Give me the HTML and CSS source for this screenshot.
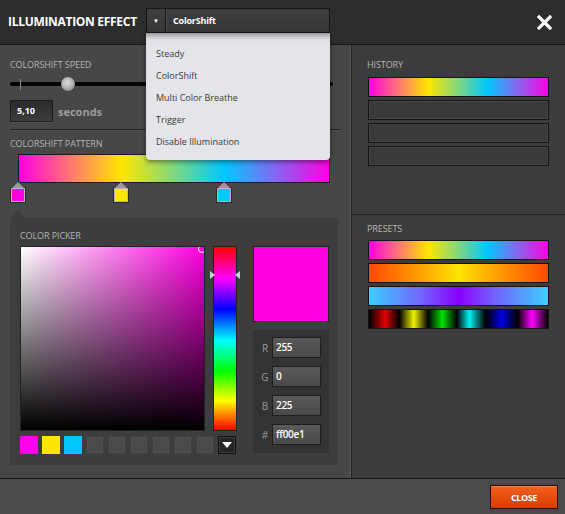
FILE: index.html
```html
<!DOCTYPE html>
<html>
<head>
<meta charset="utf-8">
<link rel="stylesheet" href="styles.css">
</head>
<body>
<div class="app">
  <header class="top">
    <div class="title">ILLUMINATION EFFECT</div>
    <div class="select">
      <span class="caret">&#9660;</span>
      <span class="sep"></span>
      <span class="value">ColorShift</span>
      <ul class="menu">
        <li>Steady</li>
        <li>ColorShift</li>
        <li>Multi Color Breathe</li>
        <li>Trigger</li>
        <li>Disable Illumination</li>
      </ul>
    </div>
    <button class="xbtn" aria-label="Close">
      <svg width="15" height="15" viewBox="0 0 15 15"><path d="M2 2 L13 13 M13 2 L2 13" stroke="#fff" stroke-width="3.2" stroke-linecap="square"/></svg>
    </button>
  </header>

  <main class="main">
    <section class="left">
      <div class="lbl">COLORSHIFT SPEED</div>
      <div class="slider">
        <span class="tick"></span>
        <span class="knob" style="left:51px"></span>
      </div>
      <div class="speed-row">
        <div class="num">5,10</div>
        <span class="unit">seconds</span>
      </div>
      <div class="divider"></div>
      <div class="lbl lbl-pattern">COLORSHIFT PATTERN</div>
      <div class="pattern"></div>
      <div class="stops">
        <span class="stop" style="left:0%;background:#ff00e1"></span>
        <span class="stop" style="left:33%;background:#ffe600"></span>
        <span class="stop" style="left:66%;background:#00c8ff"></span>
      </div>
      <div class="picker">
        <div class="lbl">COLOR PICKER</div>
        <div class="pick-body">
          <div class="pick-main">
            <div class="sv-row">
              <div class="sv"><span class="cursor"></span></div>
              <div class="hue"><span class="arr arr-l" style="top:24px"></span><span class="arr arr-r" style="top:24px"></span></div>
            </div>
            <div class="swatches">
              <span class="sw" style="background:#ff00e6"></span>
              <span class="sw" style="background:#ffe600"></span>
              <span class="sw" style="background:#00c4ff"></span>
              <span class="sw empty"></span>
              <span class="sw empty"></span>
              <span class="sw empty"></span>
              <span class="sw empty"></span>
              <span class="sw empty"></span>
              <span class="sw empty"></span>
              <span class="sw more"><svg width="10" height="6" viewBox="0 0 10 6"><path d="M0 0 H10 L5 6 Z" fill="#fff"/></svg></span>
            </div>
          </div>
          <div class="pick-side">
            <div class="preview"></div>
            <div class="rgb">
              <div class="rgb-row"><span>R</span><div class="field">255</div></div>
              <div class="rgb-row"><span>G</span><div class="field">0</div></div>
              <div class="rgb-row"><span>B</span><div class="field">225</div></div>
              <div class="rgb-row"><span>#</span><div class="field">ff00e1</div></div>
            </div>
          </div>
        </div>
      </div>
    </section>

    <section class="right">
      <div class="history">
        <div class="lbl">HISTORY</div>
        <div class="bars">
          <div class="bar g-rainbow"></div>
          <div class="bar empty"></div>
          <div class="bar empty"></div>
          <div class="bar empty"></div>
        </div>
      </div>
      <div class="presets">
        <div class="lbl">PRESETS</div>
        <div class="bars">
          <div class="bar g-rainbow"></div>
          <div class="bar g-fire"></div>
          <div class="bar g-ice"></div>
          <div class="bar g-blocks"></div>
        </div>
      </div>
    </section>
  </main>

  <footer class="foot">
    <button class="close">CLOSE</button>
  </footer>
</div>
</body>
</html>
```

FILE: styles.css
```css
* { box-sizing: border-box; margin: 0; padding: 0; }
body {
  margin: 0;
  width: 565px;
  height: 514px;
  overflow: hidden;
  background: #474747;
  font-family: "Open Sans", "Noto Sans", sans-serif;
}
.app { display: flex; flex-direction: column; height: 514px; }

/* header */
.top {
  height: 45px;
  flex: none;
  background: #2d2d2d;
  border-bottom: 1px solid #191919;
  display: flex;
  align-items: center;
  padding: 0 13px 0 8px;
  position: relative;
  z-index: 5;
}
.title {
  width: 138px;
  color: #fff;
  font-weight: 700;
  font-size: 12px;
  letter-spacing: -0.3px;
  margin-top: -2px;
}
.select {
  position: relative;
  width: 184px;
  height: 25px;
  margin-top: -3px;
  background: linear-gradient(#3f3f3f, #363636);
  border: 1px solid #141414;
  display: flex;
  align-items: center;
}
.caret { width: 18px; text-align: center; color: #fff; font-size: 6px; }
.sep { width: 1px; align-self: stretch; background: #161616; box-shadow: 1px 0 0 #474747; }
.value { padding-left: 7px; color: #fff; font-weight: 700; font-size: 9px; letter-spacing: -0.2px; }
.menu {
  position: absolute;
  top: 24px;
  left: -1px;
  width: 184px;
  height: 127px;
  list-style: none;
  padding-top: 10px;
  background: #e3e5e8;
  border-radius: 0 0 4px 4px;
  box-shadow: inset 0 7px 6px -5px rgba(0,0,0,0.45), 0 2px 5px rgba(0,0,0,0.45);
}
.menu li {
  height: 22px;
  line-height: 22px;
  padding-left: 10px;
  font-size: 9px;
  color: #3a3a3a;
}
.xbtn {
  margin-left: auto;
  background: none;
  border: 0;
  width: 15px;
  height: 15px;
  display: block;
}
.xbtn svg { display: block; }

/* main */
.main { flex: 1; display: flex; min-height: 0; }
.left {
  width: 351px;
  flex: none;
  background: #474747;
  border-right: 1px solid #575757;
  padding: 14px 10px 0 10px;
}
.lbl {
  font-size: 9px;
  line-height: 11px;
  color: #b4b4b4;
  letter-spacing: -0.1px;
}
.slider { position: relative; height: 14px; margin: 7px 7px 0 0; }
.slider::before {
  content: "";
  position: absolute;
  left: 0; right: 0; top: 5px;
  height: 4px;
  background: #050505;
  border-radius: 2px;
}
.tick { position: absolute; left: 10px; top: 2px; width: 1px; height: 11px; background: #8a8a8a; }
.knob {
  position: absolute;
  top: 0;
  width: 14px;
  height: 14px;
  border-radius: 50%;
  background: radial-gradient(circle at 45% 40%, #e0e0e0, #a8a8a8 55%, #6e6e6e);
  box-shadow: 0 0 1px #222;
}
.speed-row { display: flex; align-items: center; gap: 5px; margin-top: 9px; }
.num {
  width: 43px;
  height: 22px;
  line-height: 20px;
  padding-left: 6px;
  border: 1px solid #1c1c1c;
  background: linear-gradient(#2b2b2b, #3c3c3c);
  box-shadow: 0 1px 0 #555;
  color: #fff;
  font-weight: 700;
  font-size: 9px;
}
.unit { color: #9c9c9c; font-weight: 700; font-size: 11px; }
.divider { height: 1px; background: #202020; margin-top: 7px; box-shadow: 0 1px 0 #4f4f4f; }
.lbl-pattern { margin-top: 8px; }
.pattern {
  margin: 5px 0 0 8px;
  width: 312px;
  height: 29px;
  border: 1px solid #1a1a1a;
  background: linear-gradient(90deg, #ff00e1 0%, #ff7a70 17%, #ffe600 33%, #80d880 50%, #00c8ff 66%, #7f6cf2 82%, #ff00e1 100%);
}
.stops { position: relative; margin-left: 8px; width: 312px; height: 19px; }
.stop {
  position: absolute;
  top: 5px;
  width: 14px;
  height: 14px;
  transform: translateX(-50%);
  border: 1px solid #b8b8b8;
  box-shadow: 0 0 0 1px #2a2a2a;
}
.stop::before {
  content: "";
  position: absolute;
  left: 0;
  top: -7px;
  border-left: 6px solid transparent;
  border-right: 6px solid transparent;
  border-bottom: 6px solid #9a9a9a;
}

/* picker */
.picker {
  position: relative;
  margin-top: 16px;
  width: 328px;
  background: #3d3d3d;
  padding: 12px 9px 11px 10px;
}
.picker::before {
  content: "";
  position: absolute;
  left: 1px;
  top: -8px;
  border-left: 7px solid transparent;
  border-right: 7px solid transparent;
  border-bottom: 8px solid #3d3d3d;
}
.pick-body { display: flex; gap: 16px; margin-top: 5px; }
.pick-main { width: 217px; display: flex; flex-direction: column; gap: 5px; }
.sv-row { display: flex; gap: 8px; height: 185px; }
.sv {
  position: relative;
  overflow: hidden;
  width: 185px;
  height: 185px;
  border: 1px solid #222;
  background: linear-gradient(to bottom, rgba(0,0,0,0), #000), linear-gradient(to right, #fff, #ff00e1);
}
.cursor {
  position: absolute;
  right: -2px;
  top: -2px;
  width: 8px;
  height: 8px;
  border: 1px solid #fff;
  border-radius: 50%;
}
.hue {
  position: relative;
  width: 24px;
  border: 1px solid #222;
  background: linear-gradient(to bottom, #ff0000 0%, #ff00ff 17%, #0000ff 34%, #00ffff 51%, #00ff00 68%, #ffff00 84%, #ff0000 100%);
}
.arr { position: absolute; width: 0; height: 0; border-top: 4px solid transparent; border-bottom: 4px solid transparent; }
.arr-l { left: -4px; border-left: 5px solid #cfcfcf; }
.arr-r { right: -4px; border-right: 5px solid #cfcfcf; }
.swatches { display: flex; gap: 4px; }
.sw { width: 18px; height: 18px; }
.sw.empty { background: #4a4a4a; border: 1px solid #404040; box-shadow: inset 0 0 0 1px #4f4f4f; }
.sw.more {
  background: #262626;
  border: 1px solid #121212;
  box-shadow: inset 0 0 0 1px #3a3a3a;
  display: flex;
  align-items: center;
  justify-content: center;
}
.sw.more svg { display: block; }
.pick-side { width: 76px; display: flex; flex-direction: column; gap: 8px; }
.preview { height: 76px; background: #ff00e1; border: 1px solid #262626; }
.rgb {
  height: 123px;
  background: #333;
  padding: 7px 8px 0 5px;
  display: flex;
  flex-direction: column;
  gap: 8px;
}
.rgb-row { display: flex; align-items: center; height: 21px; }
.rgb-row span { width: 14px; text-align: center; color: #9a9a9a; font-size: 10px; }
.field {
  flex: 1;
  height: 21px;
  line-height: 19px;
  padding-left: 3px;
  border: 1px solid #1e1e1e;
  background: linear-gradient(#5a5a5a, #494949);
  color: #fff;
  font-size: 10px;
  font-weight: 600;
  letter-spacing: -0.3px;
}

/* right panel */
.right {
  flex: 1;
  border-left: 1px solid #232323;
  background: #3c3c3c;
  display: flex;
  flex-direction: column;
}
.history {
  height: 170px;
  flex: none;
  padding: 14px 16px 0 16px;
  border-bottom: 1px solid #222;
}
.presets { padding: 8px 16px 0 16px; }
.right .lbl { margin-left: -1px; }
.bars { display: flex; flex-direction: column; gap: 3px; margin-top: 7px; }
.presets .bars { margin-top: 6px; }
.bar { height: 20px; border: 1px solid #141414; }
.bar.empty { background: #3a3a3a; box-shadow: inset 0 0 0 1px #444; }
.g-rainbow { background: linear-gradient(90deg, #ff00e1 0%, #ff7a70 17%, #ffe600 33%, #80d880 50%, #00c8ff 66%, #7f6cf2 82%, #ff00e1 100%); }
.g-fire { background: linear-gradient(90deg, #ff4a00 0%, #ff9400 25%, #ffe400 50%, #ff9400 75%, #ff4a00 100%); }
.g-ice { background: linear-gradient(90deg, #3ccfff 0%, #7560ff 30%, #8a00ff 50%, #7560ff 70%, #3ccfff 100%); }
.g-blocks { background: linear-gradient(90deg, #000 0%, #e00000 9%, #000 17%, #f0f000 25%, #000 33%, #00e000 41%, #000 49%, #00f0f0 56%, #000 65%, #0000e0 74%, #000 83%, #ff00ff 91%, #000 100%); }

/* footer */
.foot {
  height: 36px;
  flex: none;
  background: #4a4a4a;
  border-top: 1px solid #161616;
  display: flex;
  justify-content: flex-end;
  padding: 6px 7px 0 0;
}
.close {
  width: 68px;
  height: 24px;
  border: 1px solid #2a0d00;
  background: linear-gradient(#f3601d, #d83d00);
  box-shadow: inset 0 1px 0 rgba(255,255,255,0.2);
  color: #fff;
  font-family: "Open Sans", "Noto Sans", sans-serif;
  font-weight: 700;
  font-size: 9px;
  letter-spacing: -0.4px;
}
```
